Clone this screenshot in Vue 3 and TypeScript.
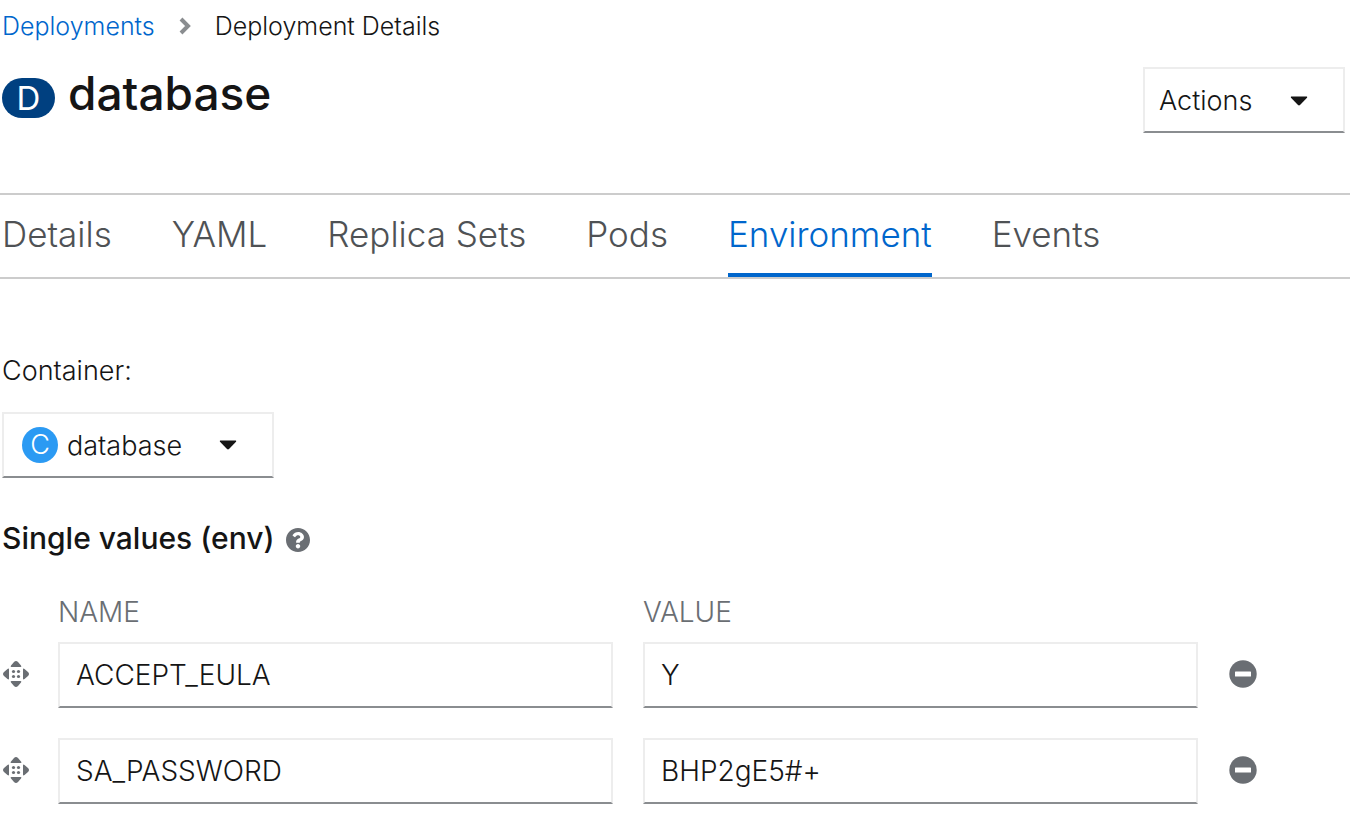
<script setup lang="ts">
import { ref } from 'vue'

interface EnvVar {
  name: string
  value: string
}

const tabs: string[] = ['Details', 'YAML', 'Replica Sets', 'Pods', 'Environment', 'Events']
const activeTab = ref('Environment')
const container = ref('database')
const envVars = ref<EnvVar[]>([
  { name: 'ACCEPT_EULA', value: 'Y' },
  { name: 'SA_PASSWORD', value: 'BHP2gE5#+' },
])

function removeVar(index: number) {
  envVars.value.splice(index, 1)
}
</script>

<template>
  <main class="page">
    <nav class="breadcrumb" aria-label="Breadcrumb">
      <a href="#deployments">Deployments</a>
      <svg class="chevron" viewBox="0 0 14 20" aria-hidden="true">
        <path d="M3 3 L10 10 L3 17" />
      </svg>
      <span aria-current="page">Deployment Details</span>
    </nav>

    <header class="heading">
      <div class="title">
        <span class="badge badge-deployment">D</span>
        <h1>database</h1>
      </div>
      <button type="button" class="box actions" aria-haspopup="menu">
        <span>Actions</span>
        <svg class="caret" viewBox="0 0 18 10" aria-hidden="true">
          <path d="M1.2 0.5 H16.8 Q17.6 1 17 1.8 L10 9 Q9 9.8 8 9 L1 1.8 Q0.4 1 1.2 0.5 Z" />
        </svg>
      </button>
    </header>

    <nav class="tabs" aria-label="Deployment sections">
      <button
        v-for="tab in tabs"
        :key="tab"
        type="button"
        class="tab"
        :class="{ active: tab === activeTab }"
        @click="activeTab = tab"
      >
        {{ tab }}
      </button>
    </nav>

    <section class="content">
      <label class="container-label" for="container">Container:</label>
      <div class="box picker">
        <span class="badge badge-container">C</span>
        <select id="container" v-model="container">
          <option value="database">database</option>
        </select>
        <svg class="caret" viewBox="0 0 18 10" aria-hidden="true">
          <path d="M1.2 0.5 H16.8 Q17.6 1 17 1.8 L10 9 Q9 9.8 8 9 L1 1.8 Q0.4 1 1.2 0.5 Z" />
        </svg>
      </div>

      <div class="section-title">
        <h2>Single values (env)</h2>
        <button type="button" class="icon-button help-button" aria-label="Help">
          <svg class="help" viewBox="8 8 496 496" aria-hidden="true">
            <path
              d="M504 256c0 137-111 248-248 248S8 393 8 256 119 8 256 8s248 111 248 248zM262.700 90c-54.500 0-89.300 23-116.500 63.800-3.500 5.300-2.400 12.400 2.700 16.300l34.700 26.300c5.200 3.900 12.600 3 16.700-2.100 17.900-22.700 30.100-35.800 57.300-35.800 20.400 0 45.700 13.100 45.700 33 0 15-12.400 22.700-32.500 34C247.100 238.500 216 254.900 216 296v4c0 6.600 5.400 12 12 12h56c6.600 0 12-5.400 12-12v-1.300c0-28.500 83.200-29.600 83.200-106.700 0-58-60.200-102-116.500-102zM256 338c-25.400 0-46 20.600-46 46s20.600 46 46 46 46-20.600 46-46-20.600-46-46-46z"
            />
          </svg>
        </button>
      </div>

      <table class="env">
        <thead>
          <tr>
            <td class="drag-col"></td>
            <th id="env-name" scope="col">NAME</th>
            <th id="env-value" scope="col">VALUE</th>
            <td class="remove-col"></td>
          </tr>
        </thead>
        <tbody>
          <tr v-for="(item, index) in envVars" :key="index">
            <td>
              <button type="button" class="icon-button" aria-label="Drag to reorder">
                <svg class="drag" viewBox="0 0 26 26" aria-hidden="true">
                  <path
                    d="M13 0 Q14 0 15 1 L18 4.500 Q19 6 17.500 6 H8.500 Q7 6 8 4.500 L11 1 Q12 0 13 0 Z M13 26 Q14 26 15 25 L18 21.500 Q19 20 17.500 20 H8.500 Q7 20 8 21.500 L11 25 Q12 26 13 26 Z M0 13 Q0 12 1 11 L4.500 8 Q6 7 6 8.500 V17.500 Q6 19 4.500 18 L1 15 Q0 14 0 13 Z M26 13 Q26 12 25 11 L21.500 8 Q20 7 20 8.500 V17.500 Q20 19 21.500 18 L25 15 Q26 14 26 13 Z"
                  />
                  <circle cx="10.500" cy="10.500" r="1.600" />
                  <circle cx="15.500" cy="10.500" r="1.600" />
                  <circle cx="10.500" cy="15.500" r="1.600" />
                  <circle cx="15.500" cy="15.500" r="1.600" />
                </svg>
              </button>
            </td>
            <td><input v-model="item.name" class="box" type="text" aria-labelledby="env-name" /></td>
            <td><input v-model="item.value" class="box" type="text" aria-labelledby="env-value" /></td>
            <td>
              <button type="button" class="icon-button" aria-label="Remove" @click="removeVar(index)">
                <svg class="minus" viewBox="0 0 28 28" aria-hidden="true">
                  <circle cx="14" cy="14" r="13.700" />
                  <rect x="6" y="11.500" width="16" height="5" rx="0.600" />
                </svg>
              </button>
            </td>
          </tr>
        </tbody>
      </table>
    </section>
  </main>
</template>

<style>
body {
  margin: 0;
  background: #fff;
}
</style>

<style scoped>
.page {
  color: #151515;
  font-family: Inter, "Liberation Sans", sans-serif;
  font-size: 27px;
  font-weight: 300;
  line-height: 40px;
}

button,
input,
select {
  margin: 0;
  padding: 0;
  border: 0;
  border-radius: 0;
  background: transparent;
  color: inherit;
  font: inherit;
}

button,
select {
  cursor: pointer;
}

svg {
  display: block;
  flex: none;
}

.box {
  box-sizing: border-box;
  height: 66px;
  border: 2px solid #ededed;
  border-bottom-color: #8a8d90;
}

.breadcrumb {
  display: flex;
  align-items: center;
  padding: 6px 2px 0;
  font-size: 25px;
}

.breadcrumb a {
  color: #06c;
  text-decoration: none;
}

.chevron {
  width: 14px;
  height: 20px;
  margin: 0 23px;
  fill: none;
  stroke: #8a8d90;
  stroke-width: 4;
}

.heading {
  display: flex;
  align-items: flex-start;
  justify-content: space-between;
  padding: 21px 5px 60px 2px;
}

.title {
  display: flex;
  align-items: center;
  gap: 13px;
}

.badge {
  display: flex;
  flex: none;
  align-items: center;
  justify-content: center;
  color: #fff;
}

.badge-deployment {
  width: 53px;
  height: 40px;
  margin-top: 10px;
  border-radius: 20px;
  background: #004080;
  font-size: 33px;
  font-weight: 400;
}

h1,
h2 {
  margin: 0;
}

h1 {
  font-size: 46px;
  font-weight: 450;
  line-height: 52px;
}

.actions {
  display: flex;
  align-items: center;
  justify-content: space-between;
  width: 202px;
  padding: 2px 35px 0 14px;
}

.caret {
  width: 18px;
  height: 10px;
  fill: #151515;
  pointer-events: none;
}

.tabs {
  display: flex;
  gap: 60px;
  padding: 0 2px;
  border-top: 2px solid #ccc;
  border-bottom: 2px solid #ccc;
}

.tab {
  height: 82px;
  border-bottom: 4px solid transparent;
  color: #4f5255;
  font-size: 35px;
}

.tab.active {
  border-bottom-color: #06c;
  color: #06c;
}

.content {
  padding-top: 72px;
}

.container-label {
  display: block;
  padding-left: 2px;
}

.picker {
  display: flex;
  align-items: center;
  width: 272px;
  margin: 21px 0 0 2px;
  padding-left: 18px;
}

.badge-container {
  width: 36px;
  height: 36px;
  border-radius: 50%;
  background: #2b9af3;
}

.picker select {
  flex: 1;
  align-self: stretch;
  min-width: 0;
  padding: 2px 0 0 9px;
  appearance: none;
}

.picker .caret {
  margin-right: 35px;
}

.section-title {
  display: flex;
  align-items: center;
  gap: 11px;
  margin-top: 40px;
  padding-left: 2px;
}

h2 {
  font-size: 30px;
  font-weight: 500;
}

.icon-button {
  display: block;
}

.help-button {
  padding-top: 4px;
}

.help {
  width: 24px;
  height: 24px;
  fill: #6a6e73;
}

.env {
  width: 100%;
  margin-top: 34px;
  border-collapse: collapse;
  table-layout: fixed;
  font-size: 28px;
}

.env td,
.env th {
  padding: 0 30px 0 0;
  font-weight: 300;
  text-align: left;
}

.env th {
  height: 50px;
  color: #6a6e73;
  vertical-align: top;
}

.env .drag-col {
  width: 58px;
  padding: 0;
}

.env .remove-col {
  width: 122px;
  padding: 0;
}

.env tbody td {
  padding-bottom: 30px;
}

.env tbody td:first-child {
  padding: 0 0 32px 3px;
}

.env tbody td:last-child {
  padding: 0 0 32px 1px;
}

.env input {
  display: block;
  width: 100%;
  padding: 0 16px;
}

.drag {
  width: 26px;
  height: 26px;
  fill: #6a6e73;
}

.minus {
  width: 28px;
  height: 28px;
  fill: #6a6e73;
}

.minus rect {
  fill: #fff;
}
</style>
